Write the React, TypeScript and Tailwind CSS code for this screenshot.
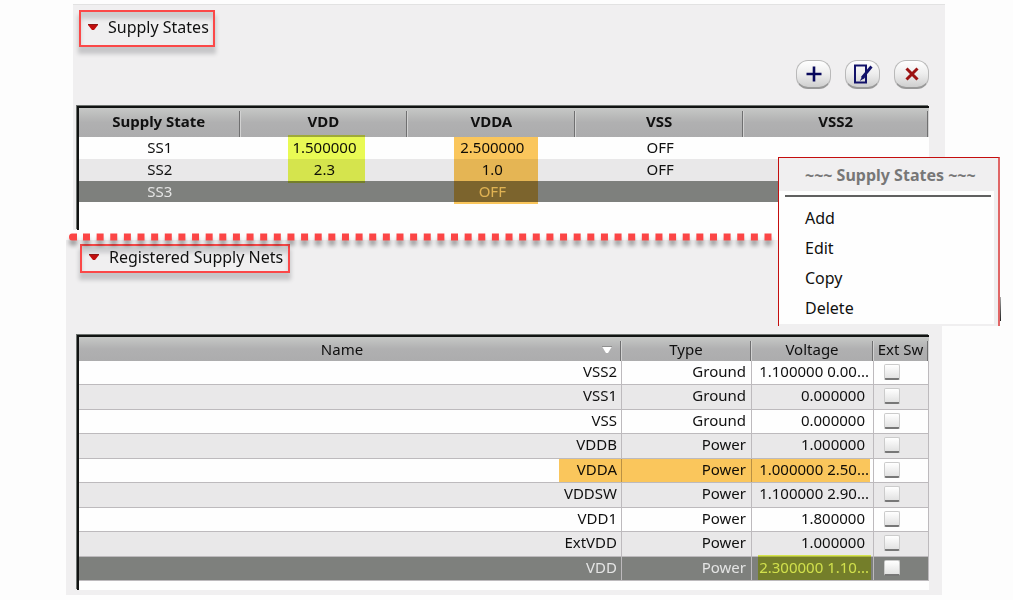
import { useState } from "react";

type StateRow = { name: string; values: string[] };
type NetRow = { name: string; type: string; voltage: string };

const stateColumns = ["Supply State", "VDD", "VDDA", "VSS", "VSS2"];

const stateRows: StateRow[] = [
  { name: "SS1", values: ["1.500000", "2.500000", "OFF", ""] },
  { name: "SS2", values: ["2.3", "1.0", "OFF", ""] },
  { name: "SS3", values: ["", "OFF", "", ""] },
];

const nets: NetRow[] = [
  { name: "VSS2", type: "Ground", voltage: "1.100000 0.00..." },
  { name: "VSS1", type: "Ground", voltage: "0.000000" },
  { name: "VSS", type: "Ground", voltage: "0.000000" },
  { name: "VDDB", type: "Power", voltage: "1.000000" },
  { name: "VDDA", type: "Power", voltage: "1.000000 2.50..." },
  { name: "VDDSW", type: "Power", voltage: "1.100000 2.90..." },
  { name: "VDD1", type: "Power", voltage: "1.800000" },
  { name: "ExtVDD", type: "Power", voltage: "1.000000" },
  { name: "VDD", type: "Power", voltage: "2.300000 1.10..." },
];

const headerFill = "bg-linear-to-b from-[#c6c8c6] via-[#b0b0b1] to-[#acacad]";
const titleFrame =
  "border-2 border-[#fb4848] shadow-[0_6px_4px_1px_#c6c6c8,inset_0_7px_4px_#cdcdcf]";
const tableFrame =
  "mt-px ml-px border-t-2 border-l-2 border-[#111312] bg-[#fefefe] shadow-[-1px_-1px_0_#6d726f]";
const separator = "border-r border-[#6f6f70] shadow-[1px_0_0_#d2d2d2]";

function SectionTitle({ title, className }: { title: string; className: string }) {
  return (
    <h2>
      <button
        type="button"
        className={`flex items-center pb-[3px] pl-[7px] text-[16px] whitespace-nowrap ${titleFrame} ${className}`}
      >
        <svg width="10" height="6" viewBox="0 0 10 6" className="mr-[10px]" aria-hidden="true">
          <path d="M0 0h10v1L6 6H4L0 1z" fill="#c00d0d" />
          <path d="M0 0h10v1H0z" fill="#8d1616" />
        </svg>
        {title}
      </button>
    </h2>
  );
}

function ToolButton({ label, children }: { label: string; children: React.ReactNode }) {
  return (
    <button
      type="button"
      aria-label={label}
      className="flex h-[29px] w-[35px] items-center justify-center rounded-[12px] border border-[#b9b9b9] border-b-2 border-b-[#999] bg-linear-to-b from-white via-[#ededed] to-[#cfcfcf]"
    >
      {children}
    </button>
  );
}

function StatesTable() {
  return (
    <div className={`h-[124px] ${tableFrame}`}>
      <table className="w-full table-fixed border-collapse">
        <colgroup>
          <col className="w-[19%]" />
          <col className="w-[19.75%]" />
          <col className="w-[19.75%]" />
          <col className="w-[19.75%]" />
          <col />
        </colgroup>
        <thead>
          <tr className={`h-[29px] ${headerFill}`}>
            {stateColumns.map((c) => (
              <th key={c} className="p-0 pt-[3px] pr-px font-bold">
                <div className={`h-[26px] leading-[21px] ${separator}`}>{c}</div>
              </th>
            ))}
          </tr>
        </thead>
        <tbody>
          {stateRows.map((row, r) => (
            <tr
              key={row.name}
              className={
                r === 2 ? "h-[21px] bg-[#7e807d] text-[#e4e4e4]" : r === 1 ? "h-[22px] bg-[#e9e8e9]" : "h-[22px]"
              }
            >
              <td className="p-0 text-center align-top leading-[20px]">{row.name}</td>
              {row.values.map((v, i) => (
                <td key={i} className="relative p-0 text-center align-top leading-[20px]">
                  {v}
                  {r === 0 && i === 0 && (
                    <span className="absolute top-[-2px] left-1/2 z-10 ml-[-36px] h-[48px] w-[77px] bg-[#eafb54] mix-blend-multiply" />
                  )}
                  {r === 0 && i === 1 && (
                    <span className="absolute top-0 left-1/2 z-10 ml-[-38px] h-[67px] w-[84px] bg-[#fbc75c] mix-blend-multiply" />
                  )}
                </td>
              ))}
            </tr>
          ))}
        </tbody>
      </table>
    </div>
  );
}

function NetsTable() {
  const [checked, setChecked] = useState<Record<string, boolean>>({});
  const cell = "relative border-r border-b border-[#bdbabd] p-0 text-right align-top";
  const head = "p-0 pt-1 pr-px font-normal";
  const headInner = `h-[20px] leading-[17px] ${separator}`;
  return (
    <div className={`pb-[9px] ${tableFrame}`}>
      <table className="w-full table-fixed border-separate border-spacing-0">
        <colgroup>
          <col />
          <col className="w-[130px]" />
          <col className="w-[122px]" />
          <col className="w-[55px]" />
        </colgroup>
        <thead>
          <tr className={`h-[24px] ${headerFill}`}>
            <th className={head}>
              <div className={`flex ${headInner}`}>
                <span className="flex-1 pl-1">Name</span>
                <svg width="12" height="8" viewBox="0 0 12 8" className="mt-[5px] mr-[7px]" aria-hidden="true">
                  <path d="M1 0.5h10L7 7H5z" fill="#fff" />
                  <path d="M1 0.5h10" stroke="#8f8f8f" />
                </svg>
              </div>
            </th>
            <th className={head}>
              <div className={headInner}>Type</div>
            </th>
            <th className={head}>
              <div className={headInner}>Voltage</div>
            </th>
            <th className={head}>
              <div className={`whitespace-nowrap ${headInner}`}>Ext Sw</div>
            </th>
          </tr>
        </thead>
        <tbody>
          {nets.map((net, i) => {
            const last = i === nets.length - 1;
            return (
              <tr
                key={net.name}
                className={
                  last
                    ? "h-[24px] bg-[#7e807d] text-[#e4e4e4]"
                    : i % 2
                      ? "h-[25px] bg-[#e9e8e9]"
                      : "h-[24px]"
                }
              >
                <td className={`${cell} pr-1 leading-[21px]`}>
                  {net.name}
                  {net.name === "VDDA" && (
                    <span className="absolute top-0 right-[-249px] z-10 h-[23px] w-[311px] bg-[#fbc75c] mix-blend-multiply" />
                  )}
                </td>
                <td className={`${cell} pr-[5px] leading-[21px]`}>{net.type}</td>
                <td
                  className={`${cell} whitespace-nowrap leading-[21px] ${net.voltage.endsWith("...") ? "pr-1" : "pr-2"}`}
                >
                  {net.voltage}
                  {last && (
                    <span className="absolute top-[-2px] right-[2px] z-10 h-[25px] w-[113px] bg-[#eafb54] mix-blend-multiply" />
                  )}
                </td>
                <td className={cell}>
                  <input
                    type="checkbox"
                    aria-label={`Ext Sw ${net.name}`}
                    checked={!!checked[net.name]}
                    onChange={(e) => setChecked({ ...checked, [net.name]: e.target.checked })}
                    className="mt-[3px] ml-[10px] block size-[16px] appearance-none rounded-[2px] border border-[#cbcbcb] border-b-2 border-b-[#777] bg-linear-to-b from-white to-[#e2e2e2] checked:to-[#8a8a8a]"
                  />
                </td>
              </tr>
            );
          })}
        </tbody>
      </table>
    </div>
  );
}

function ContextMenu() {
  return (
    <div className="absolute top-[157px] right-[13px] z-20 w-[222px] border-t border-r-2 border-l border-t-[#c40e0e] border-r-[#e06666] border-l-[#c40e0e] bg-[#f0eff0] pr-1 pb-[2px] text-[16px]">
      <div className="h-[33px] pl-[26px] font-bold leading-[35px] whitespace-nowrap text-[#777]">
        ~~~ Supply States ~~~
      </div>
      <div className="bg-[#fefefe] pt-1 pb-px pl-[6px]">
        <hr className="mr-[3px] mb-[6px] border-t-2 border-[#606060]" />
        <ul role="menu">
          {["Add", "Edit", "Copy", "Delete"].map((item) => (
            <li key={item} role="none">
              <button type="button" role="menuitem" className="block h-[30px] w-full pl-5 text-left">
                {item}
              </button>
            </li>
          ))}
        </ul>
      </div>
      <span className="absolute right-[-3px] bottom-[5px] h-[24px] w-px bg-linear-to-b from-[#aaa] to-[#222]" />
    </div>
  );
}

export default function App() {
  return (
    <main className="relative min-h-screen bg-[#fdfdfd] pt-1 font-['Noto_Sans','Open_Sans',sans-serif] text-[15px] leading-[20px] text-[#101010]">
      <section className="mr-[68px] ml-[73px] border-t border-[#e2e2e2] bg-[#f0eff0] pt-[5px] pr-4 pl-[3px]">
        <div className="pl-[3px]">
          <SectionTitle title="Supply States" className="h-[37px] w-[136px]" />
        </div>
        <div className="flex justify-end gap-[14px] pt-[13px] pb-4">
          <ToolButton label="Add">
            <svg width="16" height="16" viewBox="0 0 16 16" aria-hidden="true">
              <path d="M8 0.5v15M0.5 8h15" stroke="#08085c" strokeWidth="2.6" />
            </svg>
          </ToolButton>
          <ToolButton label="Edit">
            <svg width="20" height="20" viewBox="0 0 20 20" fill="none" stroke="#12126a" aria-hidden="true">
              <path d="M2 1.5h11v17H2z" strokeWidth="2" />
              <path d="M18.5 2.5L9 14" strokeWidth="2.8" />
              <path d="M9.8 11.5L6.8 17l5.4-3.2z" fill="#12126a" stroke="none" />
            </svg>
          </ToolButton>
          <ToolButton label="Delete">
            <svg width="14" height="14" viewBox="0 0 14 14" aria-hidden="true">
              <path d="M1.5 1.5l11 11M12.5 1.5l-11 11" stroke="#9c1212" strokeWidth="3" />
            </svg>
          </ToolButton>
        </div>
        <StatesTable />
      </section>

      <div className="h-[10px]">
        <svg className="absolute top-[230px] left-[66px] z-10 h-[20px] w-[712px]" aria-hidden="true">
          <g className="drop-shadow-[0_5px_2px_rgba(0,0,0,0.35)]">
            <path d="M11 3.5H6a3 3.5 0 0 0 0 7h5z" fill="#fb4545" />
            <path d="M17 7H712" stroke="#fb4545" strokeWidth="7" strokeDasharray="7 6.63" />
          </g>
        </svg>
      </div>

      <section className="mr-[71px] ml-[66px] bg-[#f0eff0] pt-1 pr-[13px] pb-[5px] pl-[10px]">
        <div className="pb-[61px] pl-1">
          <SectionTitle title="Registered Supply Nets" className="h-[29px] w-[210px]" />
        </div>
        <NetsTable />
      </section>

      <ContextMenu />
    </main>
  );
}
